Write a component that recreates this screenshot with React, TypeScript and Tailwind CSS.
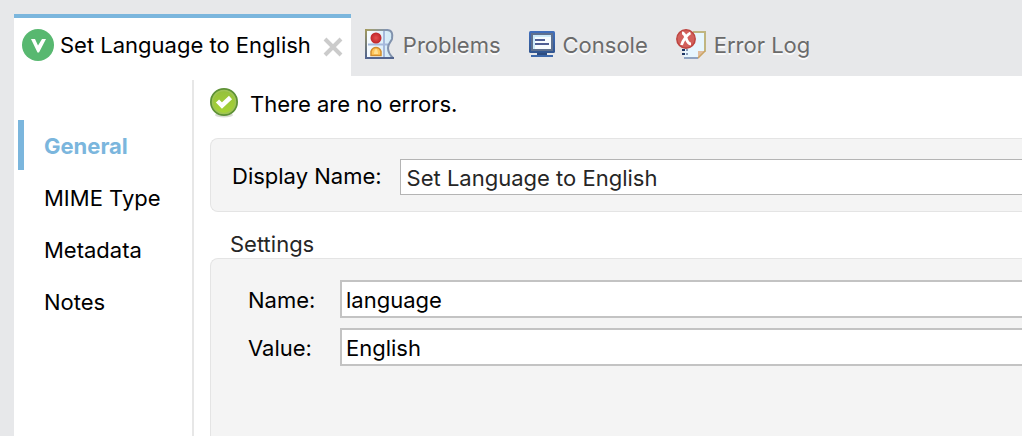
import { useState } from "react";
import type { ReactNode } from "react";

function VersionIcon() {
  return (
    <svg width="32" height="32" viewBox="0 0 32 32" className="shrink-0" aria-hidden="true">
      <circle cx="16" cy="16" r="16" fill="#58b870" />
      <path d="M9 10h4l3 6.500 4-6.500h4l-7 13.500h-1.500z" fill="#fff" />
    </svg>
  );
}

function CloseIcon() {
  return (
    <svg width="20" height="20" viewBox="0 0 20 20" aria-hidden="true">
      <path d="M2 2l16 16M18 2L2 18" stroke="#cbcbcb" strokeWidth="4" />
    </svg>
  );
}

function ProblemsIcon() {
  return (
    <svg width="30" height="30" viewBox="0 0 30 30" className="shrink-0" aria-hidden="true">
      <defs>
        <linearGradient id="problemsEdge" x1="0" y1="0" x2="0" y2="1">
          <stop offset="0" stopColor="#a39a5e" />
          <stop offset="1" stopColor="#4c6190" />
        </linearGradient>
        <linearGradient id="problemsTop" x1="0" y1="0" x2="1" y2="0">
          <stop offset="0" stopColor="#aaa15f" />
          <stop offset="1" stopColor="#7f92b5" />
        </linearGradient>
        <linearGradient id="problemsBody" x1="0" y1="0" x2="1" y2="0">
          <stop offset="0" stopColor="#f8fcff" />
          <stop offset="1" stopColor="#cfe8f6" />
        </linearGradient>
        <radialGradient id="problemsRed">
          <stop offset="0" stopColor="#e55050" />
          <stop offset="1" stopColor="#be2529" />
        </radialGradient>
      </defs>
      <path d="M1 1h22c4 0 5 4 4 9-1 3-4 4-4 9 0 4 2 7 5 10H1z" fill="url(#problemsBody)" />
      <path d="M3 15.500h20M19 2v26" stroke="#a5b9dc" strokeWidth="2" />
      <path d="M22 1c5 0 6 4 5 9-1 3-4 4-4 9 0 4 2 7 5 10" fill="none" stroke="#8192ad" strokeWidth="2" />
      <rect x="0" y="0" width="23" height="2" fill="url(#problemsTop)" />
      <rect x="0" y="0" width="2" height="30" fill="url(#problemsEdge)" />
      <path d="M0 29h29" stroke="#53658f" strokeWidth="2" />
      <circle cx="11" cy="9" r="5.500" fill="url(#problemsRed)" />
      <path d="M6 26.500v-4c1-3 3-4 5-4s4 1 5 4v4z" fill="#ffc55a" stroke="#d18d2e" strokeWidth="1.500" />
      <path d="M9 25c0-3 1-5 2-5s2 2 2 5z" fill="#ffe092" />
    </svg>
  );
}

function ConsoleIcon() {
  return (
    <svg width="26" height="26" viewBox="0 0 26 26" className="shrink-0" aria-hidden="true">
      <defs>
        <linearGradient id="consoleCase" x1="0" y1="0" x2="0" y2="1">
          <stop offset="0" stopColor="#416fbd" />
          <stop offset="1" stopColor="#31558f" />
        </linearGradient>
      </defs>
      <rect x="0" y="0" width="26" height="22" rx="1.500" fill="url(#consoleCase)" />
      <rect x="2" y="2" width="22" height="18" fill="#5f718f" />
      <rect x="4" y="4" width="18" height="14" fill="#f7fcff" />
      <path d="M4 4h18v2H6v12H4z" fill="#cceafa" />
      <path d="M6 9h10M6 13h14" stroke="#4f5f94" strokeWidth="2" />
      <path d="M8 22h10v2h6v2H2v-2h6z" fill="#3d68aa" />
      <path d="M8 23h10" stroke="#2d4c80" strokeWidth="2" />
    </svg>
  );
}

function ErrorLogIcon() {
  return (
    <svg width="30" height="30" viewBox="0 0 30 30" className="shrink-0" aria-hidden="true">
      <path d="M9 2h21v20l-8 8H8z" fill="#e7f6fe" />
      <path d="M17 3h12v20" fill="none" stroke="#c0b681" strokeWidth="2" />
      <path d="M8 29h14" stroke="#8fa4c2" strokeWidth="2" />
      <path d="M22 30v-8h8z" fill="#e0bd9e" />
      <path d="M22 29l7-7" stroke="#caa565" strokeWidth="1.500" />
      <path d="M6 21h3M6 25h3" stroke="#1f3866" strokeWidth="2" />
      <path d="M10 21h2M10 25h2" stroke="#8b9bb8" strokeWidth="2" />
      <circle cx="10" cy="10" r="9.200" fill="#d2605c" stroke="#bd4540" strokeWidth="1.500" />
      <path d="M6 4c2 0 3 2 4 5s3 6 5 6M14.500 4c-3 1-8 8-9 12" fill="none" stroke="#fff" strokeWidth="2.800" />
    </svg>
  );
}

function OkIcon() {
  return (
    <svg width="30" height="30" viewBox="0 0 30 30" className="shrink-0" aria-hidden="true">
      <defs>
        <linearGradient id="okFill" x1="0" y1="0" x2="0" y2="1">
          <stop offset="0" stopColor="#94bf3c" />
          <stop offset="1" stopColor="#a8d534" />
        </linearGradient>
      </defs>
      <ellipse cx="14" cy="27" rx="9" ry="2.500" fill="#d9dcd3" />
      <circle cx="14" cy="14" r="13" fill="url(#okFill)" stroke="#5e9136" strokeWidth="2" />
      <circle cx="14" cy="14" r="11.500" fill="none" stroke="#9fc455" strokeWidth="1.500" />
      <path d="M7.500 13l4.500 4.500 8.500-8" fill="none" stroke="#fff" strokeWidth="4.500" />
    </svg>
  );
}

function ViewTab({ icon, label }: { icon: ReactNode; label: string }) {
  return (
    <button
      type="button"
      role="tab"
      aria-selected="false"
      className="flex items-center gap-2 whitespace-nowrap text-[#6b6b6b] [text-shadow:0_2px_0_#fafafa]"
    >
      {icon}
      <span className="pt-0.5">{label}</span>
    </button>
  );
}

const sections = ["General", "MIME Type", "Metadata", "Notes"];

export default function App() {
  const [section, setSection] = useState("General");
  const [displayName, setDisplayName] = useState("Set Language to English");
  const [name, setName] = useState("language");
  const [value, setValue] = useState("English");

  return (
    <div className="flex min-h-screen flex-col overflow-hidden bg-[#e7e8ea] pl-3.5 pt-3.5 font-['Inter',sans-serif] text-[22px] leading-7 text-black">
      <div role="tablist" className="flex">
        <div className="flex h-[62px] items-center border-t-4 border-[#7bb6dd] bg-white px-2 pb-1">
          <button type="button" role="tab" aria-selected="true" className="flex items-center gap-1.5 whitespace-nowrap">
            <VersionIcon />
            Set Language to English
          </button>
          <button type="button" aria-label="Close" className="ml-3 mt-1">
            <CloseIcon />
          </button>
        </div>
        <div className="flex items-center gap-7 pb-0.5 pl-3.5">
          <ViewTab icon={<ProblemsIcon />} label="Problems" />
          <ViewTab icon={<ConsoleIcon />} label="Console" />
          <ViewTab icon={<ErrorLogIcon />} label="Error Log" />
        </div>
      </div>

      <div className="flex grow bg-white pt-1">
        <nav className="flex w-[180px] shrink-0 flex-col gap-0.5 border-r-2 border-[#e7e7e7] pl-1 pt-10">
          {sections.map((item) => (
            <button
              key={item}
              type="button"
              onClick={() => setSection(item)}
              className={
                item === section
                  ? "h-[50px] border-l-[6px] border-[#7bb6dd] pl-5 pt-0.5 text-left font-bold text-[#7bb6dd]"
                  : "h-[50px] border-l-[6px] border-transparent pl-5 pt-0.5 text-left"
              }
            >
              {item}
            </button>
          ))}
        </nav>

        <main className="flex min-w-0 grow flex-col pl-4 pt-2">
          <div className="flex items-center gap-2.5">
            <OkIcon />
            <p className="pt-0.5">There are no errors.</p>
          </div>

          <div className="mt-5 flex items-center gap-[18px] rounded-l-lg border border-r-0 border-[#e4e4e4] bg-[#f4f4f4] pb-4 pl-[21px] pt-5">
            <label htmlFor="display-name" className="whitespace-nowrap pb-0.5">
              Display Name:
            </label>
            <input
              id="display-name"
              value={displayName}
              onChange={(e) => setDisplayName(e.target.value)}
              className="h-9 min-w-0 grow border border-r-0 border-[#b4b4b4] bg-white px-1.5 pt-0.5 text-[#262626] outline-none"
            />
          </div>

          <h2 className="mt-[18px] pl-5 text-[#262626]">Settings</h2>
          <div className="grid grow grid-cols-[92px_1fr] content-start items-center gap-y-2.5 rounded-tl-lg border-l border-t border-[#e4e4e4] bg-[#f4f4f4] pl-[37px] pt-[21px]">
            <label htmlFor="setting-name" className="pt-0.5">Name:</label>
            <input
              id="setting-name"
              value={name}
              onChange={(e) => setName(e.target.value)}
              className="h-[38px] min-w-0 border-2 border-r-0 border-[#c3c3c3] bg-white px-1 pt-0.5 outline-none"
            />
            <label htmlFor="setting-value" className="pt-0.5">Value:</label>
            <input
              id="setting-value"
              value={value}
              onChange={(e) => setValue(e.target.value)}
              className="h-[38px] min-w-0 border-2 border-r-0 border-[#c3c3c3] bg-white px-1 pt-0.5 outline-none"
            />
          </div>
        </main>
      </div>
    </div>
  );
}
